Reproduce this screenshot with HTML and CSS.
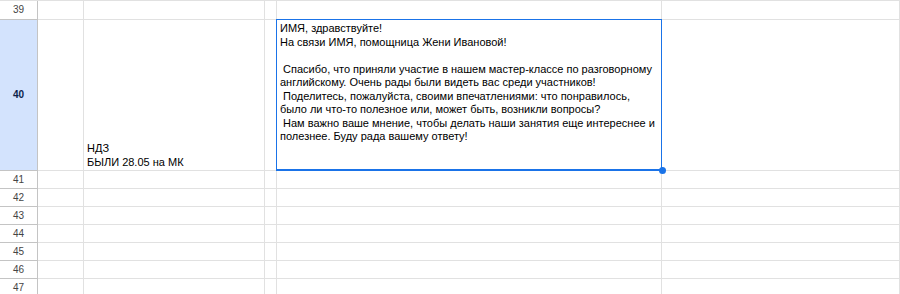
FILE: index.html
```html
<!DOCTYPE html>
<html lang="ru">
<head>
    <meta charset="UTF-8">
    <title>Таблица</title>
    <link rel="stylesheet" href="styles.css">
</head>
<body>
    <div class="sheet">
        <div class="row">
            <div class="cell head">39</div>
            <div class="cell"></div>
            <div class="cell"></div>
            <div class="cell"></div>
            <div class="cell"></div>
            <div class="cell"></div>
        </div>

        <div class="row tall">
            <div class="cell head current">40</div>
            <div class="cell"></div>
            <div class="cell bottom">НДЗ<br>БЫЛИ 28.05 на МК</div>
            <div class="cell"></div>
            <div class="cell top selected">
                <p>ИМЯ, здравствуйте!</p>
                <p>На связи ИМЯ, помощница Жени Ивановой!</p>
                <p>&nbsp;</p>
                <p>&nbsp;Спасибо, что приняли участие в нашем мастер-классе по разговорному английскому. Очень рады были видеть вас среди участников!</p>
                <p>&nbsp;Поделитесь, пожалуйста, своими впечатлениями: что понравилось, было ли что-то полезное или, может быть, возникли вопросы?</p>
                <p>&nbsp;Нам важно ваше мнение, чтобы делать наши занятия еще интереснее и полезнее. Буду рада вашему ответу!</p>
                <span class="handle"></span>
            </div>
            <div class="cell"></div>
        </div>

        <div class="row"><div class="cell head">41</div><div class="cell"></div><div class="cell"></div><div class="cell"></div><div class="cell"></div><div class="cell"></div></div>
        <div class="row"><div class="cell head">42</div><div class="cell"></div><div class="cell"></div><div class="cell"></div><div class="cell"></div><div class="cell"></div></div>
        <div class="row"><div class="cell head">43</div><div class="cell"></div><div class="cell"></div><div class="cell"></div><div class="cell"></div><div class="cell"></div></div>
        <div class="row"><div class="cell head">44</div><div class="cell"></div><div class="cell"></div><div class="cell"></div><div class="cell"></div><div class="cell"></div></div>
        <div class="row"><div class="cell head">45</div><div class="cell"></div><div class="cell"></div><div class="cell"></div><div class="cell"></div><div class="cell"></div></div>
        <div class="row"><div class="cell head">46</div><div class="cell"></div><div class="cell"></div><div class="cell"></div><div class="cell"></div><div class="cell"></div></div>
        <div class="row"><div class="cell head">47</div><div class="cell"></div><div class="cell"></div><div class="cell"></div><div class="cell"></div><div class="cell"></div></div>
    </div>
</body>
</html>
```

FILE: styles.css
```css
* {
    box-sizing: border-box;
    margin: 0;
    padding: 0;
}

body {
    background: #fff;
    font-family: "Liberation Sans", Arial, sans-serif;
    font-size: 11px;
    color: #000;
    overflow: hidden;
}

.sheet {
    border-top: 1px solid #e1e1e1;
}

.row {
    display: grid;
    grid-template-columns: 38px 46px 181px 12px 385px 1fr;
    height: 19px;
}

.row + .row {
    height: 18px;
}

.row.tall {
    height: 151px;
}

.cell {
    border-right: 1px solid #e1e1e1;
    border-bottom: 1px solid #e1e1e1;
    line-height: 13.5px;
}

.head {
    border-right-color: #c4c4c4;
    border-bottom-color: #c4c4c4;
    color: #444;
    font-size: 10px;
    display: flex;
    align-items: center;
    justify-content: center;
}

.head.current {
    background: #d3e3fd;
    color: #0b1f4a;
    font-weight: bold;
}

.bottom {
    display: flex;
    align-items: flex-end;
    padding: 0 3px 1px 3px;
}

.top {
    padding: 2px 3px 0 3px;
}

.selected {
    position: relative;
}

.selected::after {
    content: "";
    position: absolute;
    top: -1px;
    left: -1px;
    right: -1px;
    bottom: -1px;
    border: 1px solid #1a73e8;
    border-bottom-width: 2px;
}

.handle {
    position: absolute;
    right: -5px;
    bottom: -4px;
    width: 7px;
    height: 7px;
    border-radius: 50%;
    background: #1a73e8;
    z-index: 1;
}
```
